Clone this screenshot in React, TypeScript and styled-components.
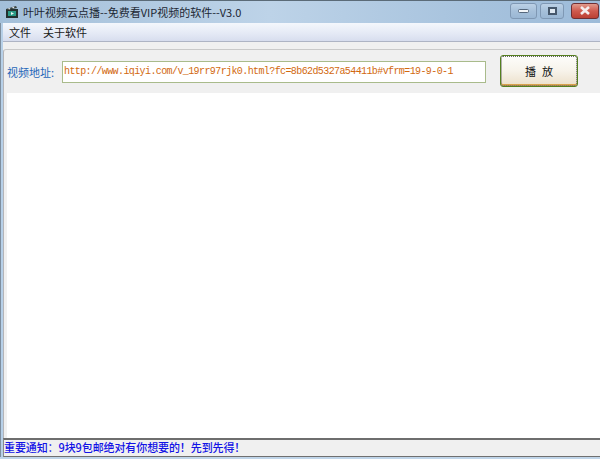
import styled, { createGlobalStyle } from "styled-components";

const cjk = `"Noto Sans CJK SC", "Liberation Sans", sans-serif`;
const mono = `"Liberation Mono", "Noto Sans CJK SC", monospace`;

const Global = createGlobalStyle`
  html, body { margin: 0; padding: 0; width: 600px; height: 459px; overflow: hidden; background: #b9d1e8; }
`;

const Win = styled.div`
  width: 600px;
  height: 459px;
  display: flex;
  flex-direction: column;
  background: #b7d0e8;
  font-family: ${cjk};
  overflow: hidden;
  border-top: 1px solid #5b6b78;
  box-sizing: border-box;
`;

const TitleBar = styled.div`
  height: 22px;
  flex: none;
  display: flex;
  align-items: center;
  padding-left: 5px;
  background: linear-gradient(90deg, #a3bfd9 0%, #bdd3e8 45%, #a6c2dd 80%, #9dbbd9 100%);
`;

const TitleText = styled.div`
  margin-left: 4px;
  font-size: 11px;
  color: #1c2733;
  white-space: nowrap;
  flex: 1;
`;

const Controls = styled.div`
  display: flex;
  margin-right: 1px;
  margin-top: -3px;
  align-items: center;
`;

const Ctl = styled.div<{ $w: number; $gap?: number; $close?: boolean }>`
  width: ${(p) => p.$w}px;
  margin-left: ${(p) => p.$gap ?? 0}px;
  height: 16px;
  box-sizing: border-box;
  border: 1px solid ${(p) => (p.$close ? "#6f2f33" : "#7f98b4")};
  border-radius: 3px;
  display: flex;
  align-items: center;
  justify-content: center;
  background: ${(p) =>
    p.$close
      ? "linear-gradient(180deg, #e09a8c 0%, #cf5a4e 50%, #bb4034 100%)"
      : "linear-gradient(180deg, #bcd1e6 0%, #a6c0da 50%, #9ab7d4 100%)"};
`;

const Body = styled.div`
  flex: 1;
  display: flex;
  flex-direction: column;
  min-height: 0;
  border-left: 1px solid #7f8f9f;
  padding-left: 2px;
  background: #b7d0e8;
`;

const MenuBar = styled.div`
  height: 18px;
  flex: none;
  display: flex;
  align-items: center;
  gap: 12px;
  padding-left: 6px;
  font-size: 11px;
  color: #1a1a1a;
  background: linear-gradient(180deg, #f4f7fc 0%, #e4e9f5 60%, #d7ddee 100%);
  border-bottom: 1px solid #aeb4c4;
`;

const Client = styled.div`
  flex: 1;
  display: flex;
  flex-direction: column;
  background: #f0f0f0;
  padding-top: 7px;
  min-height: 0;
`;

const Panel = styled.div`
  flex: 1;
  display: flex;
  flex-direction: column;
  border-top: 1px solid #c9c9c9;
  border-left: 1px solid #b4b4b8;
  border-top-left-radius: 3px;
  background: #f0f0f0;
  min-height: 0;
`;

const Row = styled.div`
  height: 43px;
  flex: none;
  display: flex;
  align-items: center;
  padding-left: 3px;
`;

const Label = styled.div`
  width: 55px;
  font-size: 11px;
  color: #1f66b8;
  white-space: nowrap;
`;

const Url = styled.div`
  width: 424px;
  height: 22px;
  box-sizing: border-box;
  border: 1px solid #a9bb8b;
  background: #fff;
  display: flex;
  align-items: center;
  padding-left: 1px;
  font-family: ${mono};
  font-size: 10px;
  letter-spacing: -0.6px;
  color: #d2690f;
  white-space: nowrap;
  overflow: hidden;
  margin-right: 14px;
`;

const Play = styled.div`
  width: 78px;
  height: 32px;
  margin-top: -1px;
  box-sizing: border-box;
  border: 1px solid #55801f;
  border-radius: 3px;
  box-shadow: inset 0 -2px 0 #d9a24a;
  outline: 1px dotted #666;
  outline-offset: -2px;
  background: linear-gradient(180deg, #fdfdfb 0%, #f7f3ea 50%, #ecdfc9 100%);
  display: flex;
  align-items: center;
  justify-content: center;
  font-size: 11px;
  color: #111;
  letter-spacing: 6px;
  text-indent: 6px;
`;

const Blank = styled.div`
  flex: 1;
  background: #fff;
  margin-left: 3px;
`;

const Status = styled.div`
  height: 19px;
  flex: none;
  box-sizing: border-box;
  background: #f0f0f0;
  border-top: 2px solid #6e6e6e;
  border-bottom: 1px solid #707070;
  border-left: 1px solid #8a8a8a;
  display: flex;
  align-items: center;
  padding-bottom: 3px;
  font-size: 11px;
  font-weight: 500;
  letter-spacing: -0.1px;
  color: #1212e6;
  white-space: nowrap;
`;

const Foot = styled.div`
  height: 2px;
  flex: none;
  background: #c0d5e9;
`;

function AppIcon() {
  return (
    <svg width="14" height="14" viewBox="0 0 14 14">
      <rect x="1" y="4" width="12" height="9" fill="#23302f" />
      <rect x="3" y="6" width="8" height="5" fill="#2a9a86" />
      <path d="M6 7l3 1.5L6 10z" fill="#e8f5f0" />
      <path d="M1 4l10-3 1 2-10 2z" fill="#3a4440" />
      <path d="M3 3.4l1.5-.5 1 1.2-1.5.4zM7 2.2l1.5-.5 1 1.2-1.5.4z" fill="#eee" />
    </svg>
  );
}

export default function App() {
  return (
    <Win>
      <Global />
      <TitleBar>
        <AppIcon />
        <TitleText>叶叶视频云点播--免费看VIP视频的软件--V3.0</TitleText>
        <Controls>
          <Ctl $w={27}>
            <svg width="11" height="4"><rect x="0.5" y="0.5" width="10" height="3" rx="1" fill="#f2f5f8" stroke="#55677c" /></svg>
          </Ctl>
          <Ctl $w={24} $gap={3}>
            <svg width="9" height="8"><rect x="1" y="1" width="7" height="6" fill="#dfe8f1" stroke="#46586c" strokeWidth="2" /></svg>
          </Ctl>
          <Ctl $w={28} $gap={7} $close>
            <svg width="12" height="9"><path d="M2 1l8 7M10 1L2 8" stroke="#f4eeee" strokeWidth="2.6" /></svg>
          </Ctl>
        </Controls>
      </TitleBar>
      <Body>
        <MenuBar>
          <span>文件</span>
          <span>关于软件</span>
        </MenuBar>
        <Client>
          <Panel>
            <Row>
              <Label>视频地址:</Label>
              <Url>http://www.iqiyi.com/v_19rr97rjk0.html?fc=8b62d5327a54411b#vfrm=19-9-0-1</Url>
              <Play>播放</Play>
            </Row>
            <Blank />
          </Panel>
          <Status>重要通知：9块9包邮绝对有你想要的！先到先得！</Status>
        </Client>
      </Body>
      <Foot />
    </Win>
  );
}
